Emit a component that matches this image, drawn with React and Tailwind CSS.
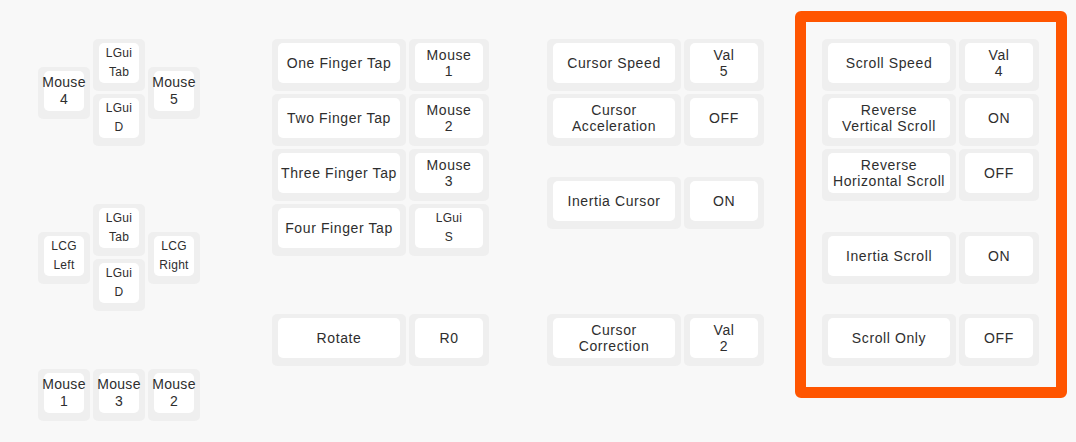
import React from 'react';

// keyboard-layout style grid: 1u = 55px, columns are quarter units, rows half units
const keys = [
  // left cluster (top)
  { x: 0, y: 0.5, lines: ['Mouse', '4'] },
  { x: 1, y: 0, lines: ['LGui', 'Tab'], small: true },
  { x: 2, y: 0.5, lines: ['Mouse', '5'] },
  { x: 1, y: 1, lines: ['LGui', 'D'], small: true },
  // left cluster (middle)
  { x: 0, y: 3.5, lines: ['LCG', 'Left'], small: true },
  { x: 1, y: 3, lines: ['LGui', 'Tab'], small: true },
  { x: 2, y: 3.5, lines: ['LCG', 'Right'], small: true },
  { x: 1, y: 4, lines: ['LGui', 'D'], small: true },
  // mouse buttons
  { x: 0, y: 6, lines: ['Mouse', '1'] },
  { x: 1, y: 6, lines: ['Mouse', '3'] },
  { x: 2, y: 6, lines: ['Mouse', '2'] },
  // taps
  { x: 4.25, y: 0, w: 2.5, lines: ['One Finger Tap'] },
  { x: 6.75, y: 0, w: 1.5, lines: ['Mouse', '1'] },
  { x: 4.25, y: 1, w: 2.5, lines: ['Two Finger Tap'] },
  { x: 6.75, y: 1, w: 1.5, lines: ['Mouse', '2'] },
  { x: 4.25, y: 2, w: 2.5, lines: ['Three Finger Tap'] },
  { x: 6.75, y: 2, w: 1.5, lines: ['Mouse', '3'] },
  { x: 4.25, y: 3, w: 2.5, lines: ['Four Finger Tap'] },
  { x: 6.75, y: 3, w: 1.5, lines: ['LGui', 'S'], small: true },
  { x: 4.25, y: 5, w: 2.5, lines: ['Rotate'] },
  { x: 6.75, y: 5, w: 1.5, lines: ['R0'] },
  // cursor
  { x: 9.25, y: 0, w: 2.5, lines: ['Cursor Speed'] },
  { x: 11.75, y: 0, w: 1.5, lines: ['Val', '5'] },
  { x: 9.25, y: 1, w: 2.5, lines: ['Cursor', 'Acceleration'] },
  { x: 11.75, y: 1, w: 1.5, lines: ['OFF'] },
  { x: 9.25, y: 2.5, w: 2.5, lines: ['Inertia Cursor'] },
  { x: 11.75, y: 2.5, w: 1.5, lines: ['ON'] },
  { x: 9.25, y: 5, w: 2.5, lines: ['Cursor', 'Correction'] },
  { x: 11.75, y: 5, w: 1.5, lines: ['Val', '2'] },
  // scroll
  { x: 14.25, y: 0, w: 2.5, lines: ['Scroll Speed'] },
  { x: 16.75, y: 0, w: 1.5, lines: ['Val', '4'] },
  { x: 14.25, y: 1, w: 2.5, lines: ['Reverse', 'Vertical Scroll'] },
  { x: 16.75, y: 1, w: 1.5, lines: ['ON'] },
  { x: 14.25, y: 2, w: 2.5, lines: ['Reverse', 'Horizontal Scroll'] },
  { x: 16.75, y: 2, w: 1.5, lines: ['OFF'] },
  { x: 14.25, y: 3.5, w: 2.5, lines: ['Inertia Scroll'] },
  { x: 16.75, y: 3.5, w: 1.5, lines: ['ON'] },
  { x: 14.25, y: 5, w: 2.5, lines: ['Scroll Only'] },
  { x: 16.75, y: 5, w: 1.5, lines: ['OFF'] },
];

const Key = ({ k }) => {
  const w = k.w || 1;
  const place = {
    gridColumn: `${k.x * 4 + 1} / span ${w * 4}`,
    gridRow: `${k.y * 2 + 1} / span 2`,
  };
  const text = k.small
    ? 'text-[12px] leading-[19px] tracking-[0.3px]'
    : w === 1
      ? 'text-[14px] leading-[17px] tracking-[0.3px]'
      : 'text-[14px] leading-[16px] tracking-[0.6px]';

  return (
    <div style={place} className="pr-[3px] pb-[3px]">
      <div className="h-full rounded-[5px] bg-[#efefef] px-[6px] pt-[4px] pb-[8px]">
        <div className={`flex h-full flex-col items-center justify-center rounded-[5px] bg-white text-center text-[#2e2e2e] ${text}`}>
          {k.lines.map((l, i) => (
            <span key={i} className="block whitespace-nowrap">{l}</span>
          ))}
        </div>
      </div>
    </div>
  );
};

export default function App() {
  return (
    <div className="relative h-[442px] w-[1076px] overflow-hidden bg-[#f8f8f8] pl-[38px] pt-[39px] font-['Liberation_Sans',Arial,sans-serif]">
      <div className="grid grid-cols-[repeat(76,13.75px)] grid-rows-[repeat(14,27.5px)]">
        {keys.map((k, i) => (
          <Key key={i} k={k} />
        ))}
      </div>
      {/* highlight around the scroll settings */}
      <div className="pointer-events-none absolute left-[795px] top-[11px] h-[387px] w-[272px] rounded-[6px] border-[11px] border-[#ff5500]" />
    </div>
  );
}
